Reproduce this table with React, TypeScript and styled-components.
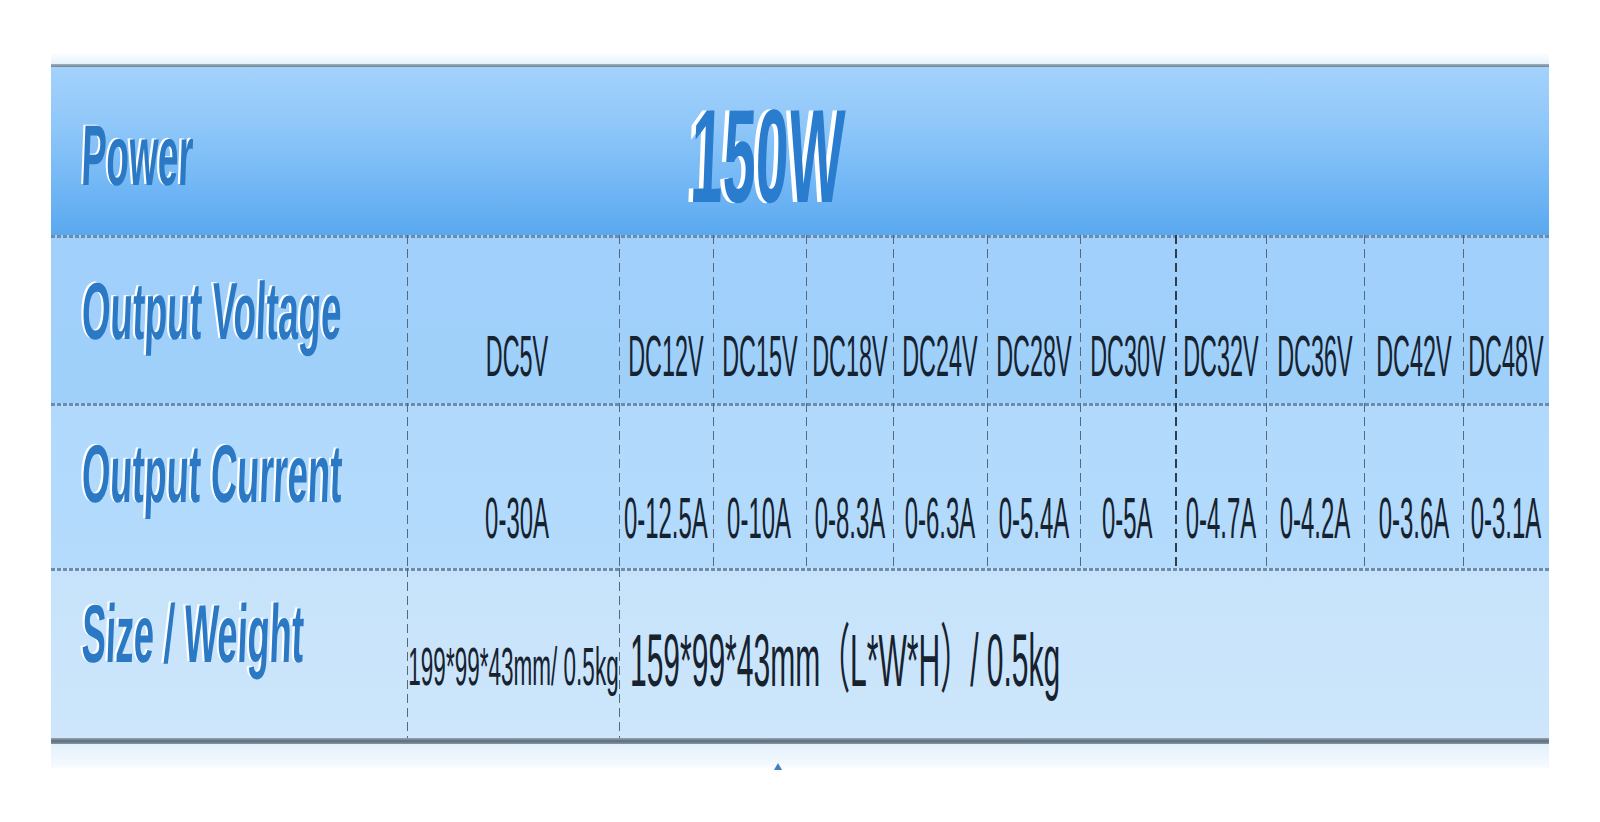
import styled, { createGlobalStyle } from "styled-components";

const GlobalStyle = createGlobalStyle`
  html, body {
    margin: 0;
    padding: 0;
    background: #ffffff;
    overflow: hidden;
  }
  body {
    font-family: "Liberation Sans", Arial, "Noto Sans CJK SC", sans-serif;
  }
`;

const volts = ["DC12V", "DC15V", "DC18V", "DC24V", "DC28V", "DC30V", "DC32V", "DC36V", "DC42V", "DC48V"];
const amps = ["0-12.5A", "0-10A", "0-8.3A", "0-6.3A", "0-5.4A", "0-5A", "0-4.7A", "0-4.2A", "0-3.6A", "0-3.1A"];

const App = () => {
  return (
    <>
      <GlobalStyle />
      <Page>
        <Table>
          <TopEdge />
          <TopRule />
          <Header>
            <LabelCell $pt={45}>
              <Label $size={86} $sx={0.43}>Power</Label>
            </LabelCell>
            <TitleCell>
              <Title>150W</Title>
            </TitleCell>
          </Header>

          <Row $h={168} $bg="linear-gradient(#a0d0fb, #9fd0fa)">
            <LabelCell $pt={36}>
              <Label $size={81} $sx={0.452}>Output Voltage</Label>
            </LabelCell>
            <Cell $pb={18} $shift={8} $line>
              <Value $size={57} $sx={0.41}>DC5V</Value>
            </Cell>
            {volts.map((v, i) => (
              <Cell key={v} $pb={18} $line $strong={i === 6}>
                <Value $size={57} $sx={0.41}>{v}</Value>
              </Cell>
            ))}
          </Row>

          <Row $h={165} $bg="linear-gradient(#b0d9fc, #b4dbfc)">
            <LabelCell $pt={30}>
              <Label $size={82} $sx={0.443}>Output Current</Label>
            </LabelCell>
            <Cell $pb={21} $shift={8} $line>
              <Value $size={57} $sx={0.42}>0-30A</Value>
            </Cell>
            {amps.map((a, i) => (
              <Cell key={a} $pb={21} $line $strong={i === 6}>
                <Value $size={57} $sx={0.42}>{a}</Value>
              </Cell>
            ))}
          </Row>

          <Row $h={170} $bg="linear-gradient(#c6e3fb, #cde6fb)">
            <LabelCell $pt={25}>
              <Label $size={82} $sx={0.44}>Size / Weight</Label>
            </LabelCell>
            <Cell $pb={45} $line>
              <Value $size={53} $sx={0.425}>199*99*43mm/ 0.5kg</Value>
            </Cell>
            <WideCell>
              <Value $size={75} $sx={0.4} $origin="left">159*99*43mm（L*W*H）/ 0.5kg</Value>
            </WideCell>
          </Row>

          <BottomRule />
          <Fade>
            <Peak />
          </Fade>
        </Table>
      </Page>
    </>
  );
};

export default App;

const Page = styled.div`
  padding: 53px 0 0 51px;
`;

const Table = styled.div`
  width: 1498px;
  overflow: hidden;
`;

const TopEdge = styled.div`
  height: 11px;
  background: linear-gradient(#fdfeff, #e4f2fc);
`;

const TopRule = styled.div`
  height: 3px;
  background: linear-gradient(#a2b2be, #6e8393);
`;

const Header = styled.div`
  height: 168px;
  display: grid;
  grid-template-columns: 640px 1fr;
  background: linear-gradient(#a3d2fb 0%, #8fc7f9 35%, #72b7f5 70%, #5aa8ef 100%);
`;

const TitleCell = styled.div`
  padding-top: 23px;
`;

const Title = styled.span`
  display: inline-block;
  white-space: nowrap;
  font-size: 133px;
  line-height: 1;
  font-weight: 700;
  color: #2a7ccf;
  text-shadow: -10px 0 0 #ffffff;
  transform: scaleX(0.44) skewX(-5deg);
  transform-origin: left center;
`;

const Row = styled.div<{ $h: number; $bg: string }>`
  height: ${(p) => p.$h}px;
  display: grid;
  grid-template-columns: 356px 212px 94px 93px 87px 94px 93px 95px 91px 98px 99px 86px;
  background:
    repeating-linear-gradient(90deg, #6b8cab 0 4px, transparent 4px 6px) top left / 100% 3px no-repeat,
    ${(p) => p.$bg};
`;

const LabelCell = styled.div<{ $pt: number }>`
  padding: ${(p) => p.$pt}px 0 0 31px;
`;

const Label = styled.span<{ $size: number; $sx: number }>`
  display: inline-block;
  white-space: nowrap;
  font-size: ${(p) => p.$size}px;
  line-height: 1;
  font-weight: 700;
  color: #2b79c5;
  text-shadow: -5px -1px 0 #ffffff;
  transform: scaleX(${(p) => p.$sx}) skewX(-5deg);
  transform-origin: left center;
`;

const dash = (c: string, w: number) =>
  `repeating-linear-gradient(180deg, ${c} 0 9px, transparent 9px 14px) left top / ${w}px 100% no-repeat`;

const Cell = styled.div<{ $pb: number; $shift?: number; $line?: boolean; $strong?: boolean }>`
  display: flex;
  align-items: flex-end;
  justify-content: center;
  padding-bottom: ${(p) => p.$pb}px;
  padding-left: ${(p) => p.$shift ?? 0}px;
  background: ${(p) => (p.$line ? dash(p.$strong ? "#2e3e4c" : "#55697a", p.$strong ? 2 : 1) : "none")};
`;

const WideCell = styled.div`
  grid-column: span 10;
  display: flex;
  align-items: flex-end;
  padding: 0 0 40px 11px;
  background: ${dash("#55697a", 1)};
`;

const Value = styled.span<{ $size: number; $sx: number; $origin?: string }>`
  display: inline-block;
  flex-shrink: 0;
  white-space: nowrap;
  font-size: ${(p) => p.$size}px;
  line-height: 1;
  color: #17222f;
  transform: scaleX(${(p) => p.$sx});
  transform-origin: ${(p) => p.$origin ?? "center"} center;
`;

const BottomRule = styled.div`
  height: 6px;
  background: linear-gradient(#9aa8b4, #5d6c79 50%, #8796a3);
`;

const Fade = styled.div`
  height: 26px;
  display: flex;
  align-items: flex-end;
  padding-left: 723px;
  background: linear-gradient(#e3f1fc, #f4f9fe 80%, #ffffff);
`;

const Peak = styled.span`
  width: 0;
  height: 0;
  border-left: 4px solid transparent;
  border-right: 4px solid transparent;
  border-bottom: 7px solid #3f80c2;
`;
